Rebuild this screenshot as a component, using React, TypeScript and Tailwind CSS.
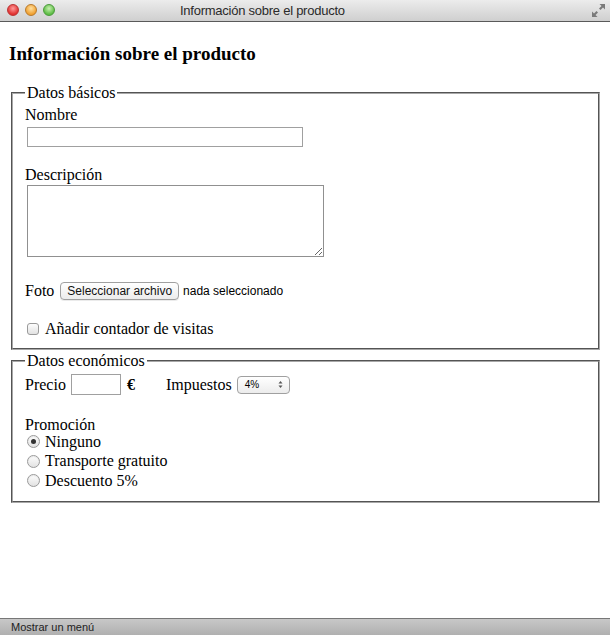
import React from "react";

const serif = "font-['Liberation_Serif','Times_New_Roman',serif]";
const sans = "font-['Liberation_Sans','Helvetica',Arial,sans-serif]";

function Radio({ checked }: { checked?: boolean }) {
  return (
    <span className="mr-[5px] ml-[2px] inline-flex h-[13px] w-[13px] items-center justify-center rounded-full border border-[#9a9a9a] bg-gradient-to-b from-[#fdfdfd] to-[#e2e2e2] shadow-[inset_0_1px_1px_rgba(0,0,0,0.08)]">
      {checked && <span className="h-[5px] w-[5px] rounded-full bg-[#333]" />}
    </span>
  );
}

function Checkbox() {
  return (
    <span className="mr-[6px] ml-[2px] inline-block h-[12px] w-[12px] rounded-[3px] border border-[#9a9a9a] bg-gradient-to-b from-[#fdfdfd] to-[#e2e2e2]" />
  );
}

function TitleBar() {
  return (
    <div className="relative flex h-[22px] items-center border-b border-[#5a5a5a] bg-gradient-to-b from-[#ececec] to-[#cfcfcf] pl-[180px]">
      <div className="absolute left-[7px] top-[4px] flex gap-[6px]">
        <span className="h-[12px] w-[12px] rounded-full border border-[#b33] bg-[radial-gradient(circle_at_50%_35%,#ff9a9a,#e0302f_70%)]" />
        <span className="h-[12px] w-[12px] rounded-full border border-[#b8792a] bg-[radial-gradient(circle_at_50%_35%,#ffe0a0,#f0a030_70%)]" />
        <span className="h-[12px] w-[12px] rounded-full border border-[#4a9a3a] bg-[radial-gradient(circle_at_50%_35%,#c8f0b0,#5cbc44_70%)]" />
      </div>
      <span className={`${sans} text-[13px] tracking-[-0.25px] text-[#2a2a2a]`}>
        Información sobre el producto
      </span>
      <svg
        className="absolute right-[5px] top-[4px]"
        width="13"
        height="13"
        viewBox="0 0 13 13"
      >
        <path d="M13 0 L7.5 0 L9.5 2 L7 4.5 L8.5 6 L11 3.5 L13 5.5 Z" fill="#7a7a7a" />
        <path d="M0 13 L5.5 13 L3.5 11 L6 8.5 L4.5 7 L2 9.5 L0 7.5 Z" fill="#7a7a7a" />
      </svg>
    </div>
  );
}

export default function App() {
  return (
    <div className={`flex h-[635px] w-[610px] flex-col bg-white text-black ${serif}`}>
      <TitleBar />
      <div className="flex-1">
        <h1 className="ml-[9px] mt-[21px] text-[19px] font-bold leading-[22px]">
          Información sobre el producto
        </h1>

        {/* Datos básicos */}
        <fieldset className="ml-[11px] mr-[10px] mt-[19px] border-2 border-[#a8a8a8] px-[12px] pb-[10px] [border-style:groove]">
          <legend className="px-[2px] text-[16px] leading-[18px]">Datos básicos</legend>
          <div className="mt-[4px] text-[16px] leading-[18px]">Nombre</div>
          <input
            type="text"
            className="ml-[2px] mt-[3px] block h-[20px] w-[276px] border border-[#a0a0a0] bg-white outline-none"
          />
          <div className="mt-[19px] text-[16px] leading-[18px]">Descripción</div>
          <textarea className="ml-[2px] mt-[1px] block h-[72px] w-[297px] resize border border-[#909090] outline-none" />
          <div className="mt-[25px] flex items-center text-[16px] leading-[18px]">
            <span>Foto</span>
            <span
              className={`${sans} ml-[6px] inline-flex h-[18px] items-center rounded-[4px] border border-[#a0a0a0] bg-gradient-to-b from-white to-[#ececec] px-[6px] text-[12px] text-[#111] shadow-[0_1px_0_rgba(0,0,0,0.08)]`}
            >
              Seleccionar archivo
            </span>
            <span className={`${sans} ml-[4px] text-[12px]`}>nada seleccionado</span>
          </div>
          <div className="mt-[20px] flex items-center text-[16px] leading-[18px]">
            <Checkbox />
            <span>Añadir contador de visitas</span>
          </div>
        </fieldset>

        {/* Datos económicos */}
        <fieldset className="ml-[11px] mr-[10px] mt-[2px] border-2 border-[#a8a8a8] px-[12px] pb-[11px] [border-style:groove]">
          <legend className="px-[2px] text-[16px] leading-[18px]">Datos económicos</legend>
          <div className="mt-[4px] flex items-center text-[16px] leading-[18px]">
            <span>Precio</span>
            <input
              type="text"
              className="ml-[5px] block h-[21px] w-[50px] border border-[#a0a0a0] bg-white outline-none"
            />
            <span className="ml-[6px] font-bold">€</span>
            <span className="ml-[31px]">Impuestos</span>
            <span
              className={`${sans} ml-[5px] flex h-[18px] w-[53px] items-center justify-between rounded-[4px] border border-[#a0a0a0] bg-gradient-to-b from-white to-[#ececec] pl-[7px] pr-[6px] text-[10px]`}
            >
              <span>4%</span>
              <svg width="5" height="9" viewBox="0 0 5 9">
                <path d="M0.5 3.5 L2.5 1 L4.5 3.5 Z" fill="#555" />
                <path d="M0.5 5.5 L2.5 8 L4.5 5.5 Z" fill="#555" />
              </svg>
            </span>
          </div>
          <div className="mt-[21px] text-[16px] leading-[18px]">Promoción</div>
          <div className="mt-[-2px] flex h-[19px] items-center text-[16px]">
            <Radio checked />
            <span>Ninguno</span>
          </div>
          <div className="flex h-[20px] items-center text-[16px]">
            <Radio />
            <span>Transporte gratuito</span>
          </div>
          <div className="flex h-[19px] items-center text-[16px]">
            <Radio />
            <span>Descuento 5%</span>
          </div>
        </fieldset>
      </div>

      {/* status bar */}
      <div className="flex h-[17px] items-center border-t border-[#777] bg-gradient-to-b from-[#c8c8c8] to-[#b0b0b0] pl-[11px]">
        <span className={`${sans} text-[11px] text-[#222]`}>Mostrar un menú</span>
      </div>
    </div>
  );
}
